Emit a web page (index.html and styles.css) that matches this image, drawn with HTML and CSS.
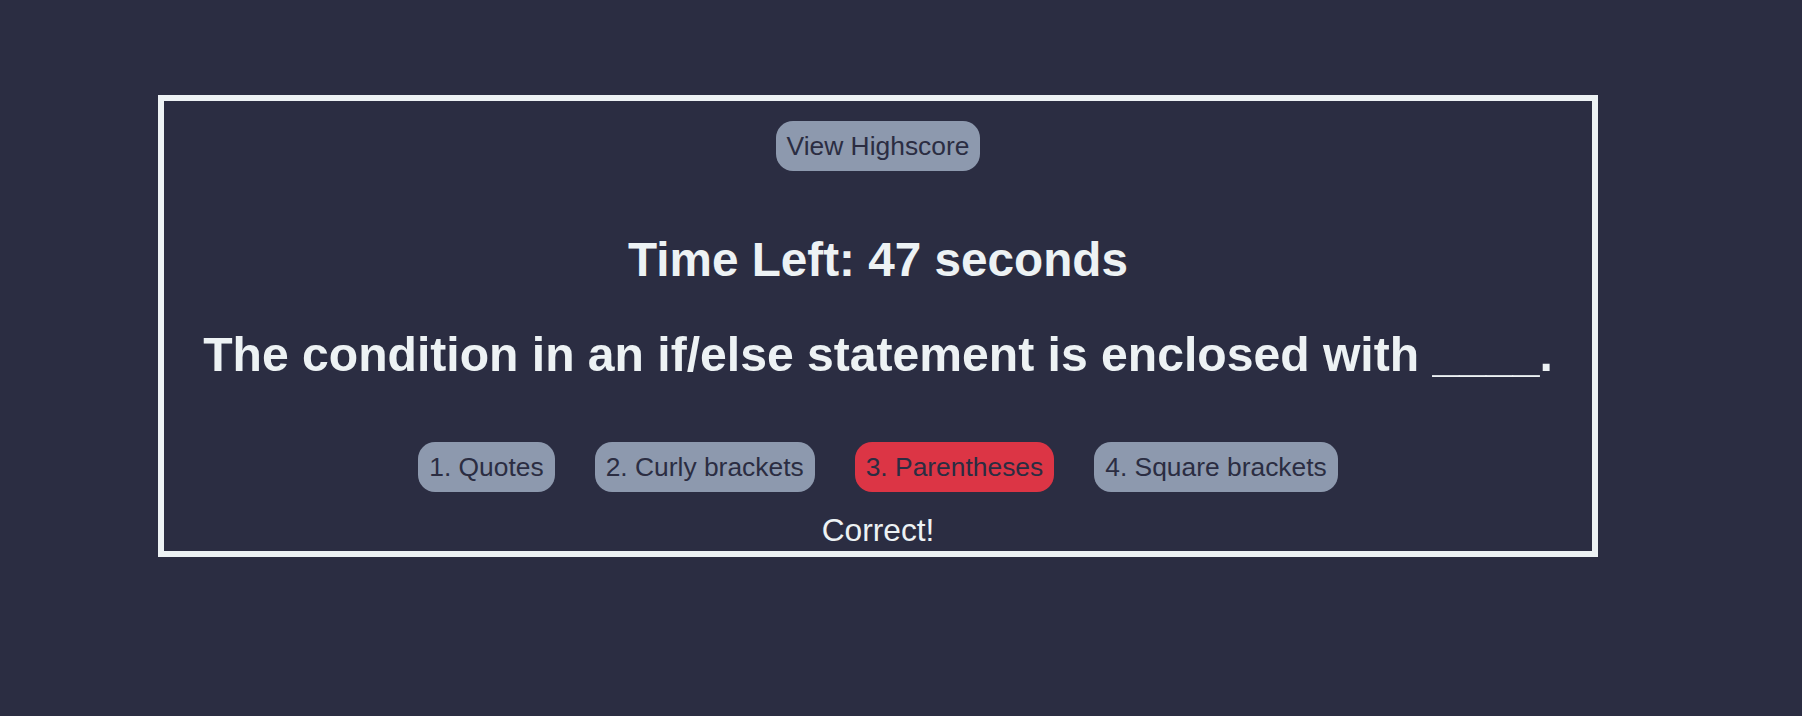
FILE: index.html
```html
<!DOCTYPE html>
<html lang="en">
<head>
<meta charset="utf-8">
<title>Quiz</title>
<link rel="stylesheet" href="styles.css">
</head>
<body>
<main class="quiz">
  <div class="top-row">
    <button class="pill">View Highscore</button>
  </div>
  <h2 class="timer">Time Left: 47 seconds</h2>
  <h2 class="question">The condition in an if/else statement is enclosed with ____.</h2>
  <div class="answers">
    <button class="pill">1. Quotes</button>
    <button class="pill">2. Curly brackets</button>
    <button class="pill pill-wrong">3. Parentheses</button>
    <button class="pill">4. Square brackets</button>
  </div>
  <p class="feedback">Correct!</p>
</main>
</body>
</html>
```

FILE: styles.css
```css
html, body {
  margin: 0;
  padding: 0;
  background: #2b2d42;
  font-family: "Liberation Sans", Arial, Helvetica, sans-serif;
  color: #edf2f4;
}

body {
  padding-top: 95px;
}

.quiz {
  box-sizing: border-box;
  width: 1440px;
  margin-left: 158px;
  border: 6px solid #edf2f4;
  padding: 20px 0 2px;
  display: flex;
  flex-direction: column;
  align-items: center;
}

.top-row {
  display: flex;
  justify-content: center;
}

.pill {
  box-sizing: border-box;
  height: 50px;
  padding: 0 11px;
  border: none;
  border-radius: 17px;
  background: #8d99ae;
  color: #2b2d42;
  font-family: "Liberation Sans", Arial, Helvetica, sans-serif;
  font-size: 26.4px;
  line-height: 50px;
  cursor: pointer;
}

.pill-wrong {
  background: #dc3545;
}

.timer,
.question {
  margin: 0;
  font-weight: bold;
  text-align: center;
  color: #edf2f4;
}

.timer {
  margin-top: 61px;
  font-size: 47.7px;
  line-height: 55px;
}

.question {
  margin-top: 40px;
  font-size: 48.1px;
  line-height: 55px;
}

.answers {
  margin-top: 60px;
  display: flex;
  gap: 40px;
  justify-content: center;
}

.feedback {
  margin: 20px 0 0;
  font-size: 31.7px;
  color: #edf2f4;
}
```
